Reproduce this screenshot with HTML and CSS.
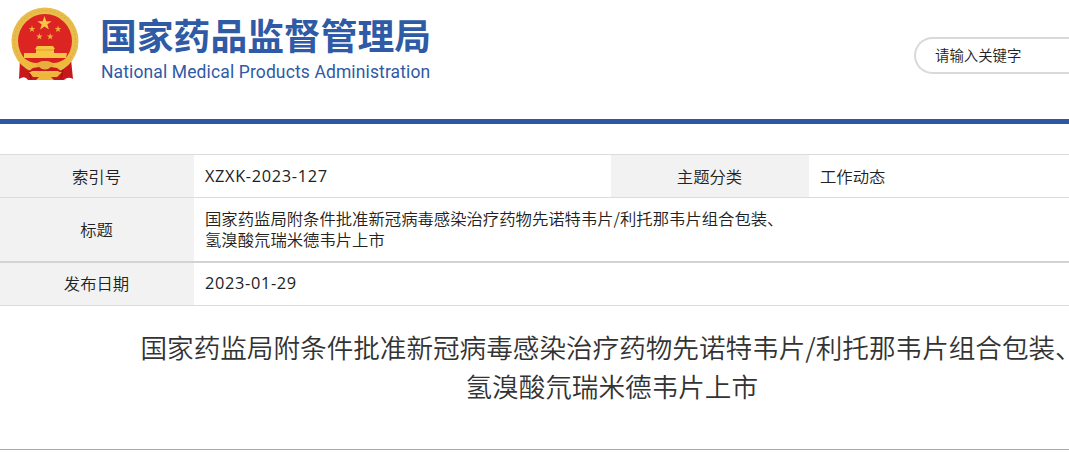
FILE: index.html
```html
<!DOCTYPE html>
<html lang="zh-CN">
<head>
	<title>国家药品监督管理局</title>
	<meta charset="utf-8">
	<meta name="viewport" content="width=device-width, initial-scale=1">

	<link rel="stylesheet" href="styles.css">
</head>
<body>

	<div class="header">
		<div class="logo">
			<svg class="emblem" viewBox="0 0 70 76" width="70" height="76">
				<!-- ribbon -->
				<path d="M9 52 L8 72 Q14 68 17 73 H53 Q57 69 62 72 L60 52 Z" fill="#c9181c"/>
				<path d="M17 57 L20 72 M53 57 L50 72" stroke="#a80f16" stroke-width="1.5"/>
				<!-- wheat ring -->
				<circle cx="34" cy="34" r="33.5" fill="#e8bd4c"/>
				<circle cx="34" cy="34" r="30.5" fill="none" stroke="#e0ae3e" stroke-width="1.2" stroke-dasharray="2 2"/>
				<circle cx="34" cy="34" r="27" fill="#dc2422"/>
				<!-- stars -->
				<path d="M33.5 9 L35.3 14.2 H40.6 L36.3 17.4 L37.9 22.6 L33.5 19.4 L29.1 22.6 L30.7 17.4 L26.4 14.2 H31.7 Z" fill="#f5c744"/>
				<g fill="#f0b040">
					<path d="M21 18.5 L21.8 21 H24.3 L22.3 22.5 L23.1 25 L21 23.5 L18.9 25 L19.7 22.5 L17.7 21 H20.2 Z"/>
					<path d="M47 18.5 L47.8 21 H50.3 L48.3 22.5 L49.1 25 L47 23.5 L44.9 25 L45.7 22.5 L43.7 21 H46.2 Z"/>
					<path d="M28.4 26 L29.2 28.5 H31.7 L29.7 30 L30.5 32.5 L28.4 31 L26.3 32.5 L27.1 30 L25.1 28.5 H27.6 Z"/>
					<path d="M39.2 26 L40 28.5 H42.5 L40.5 30 L41.3 32.5 L39.2 31 L37.1 32.5 L37.9 30 L35.9 28.5 H38.4 Z"/>
				</g>
				<!-- gate -->
				<path d="M26 39 H42 L44 42 H43 V46 H56 L55 51 H13 L13 46 H25 V42 H24 Z" fill="#f6c541"/>
				<path d="M25 43 H43" stroke="#dda02e" stroke-width="1"/>
				<!-- gear and knot -->
				<path d="M7 51 H61 Q54 61 46 61 L40 60 Q34 65 28 60 L22 61 Q13 60 7 51 Z" fill="#efb93c"/>
				<path d="M13 51 H55 Q49 56 42 56 Q34 52 26 56 Q19 56 13 51 Z" fill="#d3201f"/>
				<path d="M25 58 Q34 50 43 58 Q40 62 34 62 Q28 62 25 58 Z" fill="#e7ad3e"/>
				<path d="M22 61 L28 60 Q34 65 40 60 L46 61 L50 64 H18 Z" fill="#c9181c"/>
				<path d="M18 65 H28 L34 67 L40 65 H51 L46 70 L40 70 L43 73 H25 L28 70 L22 70 Z" fill="#f0b63b"/>
			</svg>
			<div class="logo_text">
				<div class="name">国家药品监督管理局</div>
				<div class="name_en">National Medical Products Administration</div>
			</div>
		</div>
		<div class="search">请输入关键字</div>
	</div>

	<table class="info">
		<tr class="row">
			<th>索引号</th>
			<td class="code">XZXK-2023-127</td>
			<th>主题分类</th>
			<td>工作动态</td>
		</tr>
		<tr class="row_title">
			<th>标题</th>
			<td colspan="3">国家药监局附条件批准新冠病毒感染治疗药物先诺特韦片/利托那韦片组合包装、<br>氢溴酸氘瑞米德韦片上市</td>
		</tr>
		<tr class="row">
			<th>发布日期</th>
			<td colspan="3" class="code">2023-01-29</td>
		</tr>
	</table>

	<h1 class="title">
		<div>国家药监局附条件批准新冠病毒感染治疗药物先诺特韦片/利托那韦片组合包装、</div>
		<div class="second">氢溴酸氘瑞米德韦片上市</div>
	</h1>

</body>
</html>
```
FILE: styles.css
```css
* {
	box-sizing: border-box;
}

body {
	margin: 0px;
	background: white;
	color: #222;
	font-family: "Noto Sans CJK SC", sans-serif;
	height: 454px;
	overflow: hidden;
}

.header {
	display: flex;
	justify-content: space-between;
	height: 124px;
	border-bottom: 5px solid #3058a2;
	overflow: hidden;
}

.logo {
	display: flex;
	padding: 7px 0px 0px 11px;
}

.logo_text {
	padding: 7px 0px 0px 19px;
	color: #2f5aa5;
	white-space: nowrap;
}

.name {
	font-size: 36.8px;
	line-height: 40px;
	font-weight: bold;
}

.name_en {
	font-family: Roboto, sans-serif;
	font-size: 17.5px;
	line-height: 20px;
	letter-spacing: 0.12px;
	margin: 8px 0px 0px 1px;
}

.search {
	width: 155px;
	height: 37px;
	margin-top: 37px;
	padding-left: 19px;
	border: 2px solid #d9d9d9;
	border-right: 0px;
	border-radius: 19px 0px 0px 19px;
	font-size: 14.4px;
	line-height: 31px;
	font-weight: 350;
}

.info {
	width: 1069px;
	margin-top: 30px;
	table-layout: fixed;
	border-collapse: collapse;
	font-size: 16.35px;
	line-height: 21px;
	font-weight: 350;
}

.info th {
	width: 194px;
	padding: 0px 1px 0px 0px;
	background: #f2f2f2;
	font-weight: 350;
	text-align: center;
}

.info td {
	padding: 0px 0px 0px 11px;
	white-space: nowrap;
}

.info th + td {
	width: 417px;
}

.info td + th {
	width: 198px;
}

.row {
	height: 43px;
	border-top: 1px solid #dcdcdc;
	border-bottom: 1px solid #dcdcdc;
}

.row_title {
	height: 64px;
	border-bottom: 2px solid #d3d3d3;
}

.row_title + .row {
	height: 44px;
}

.info .code {
	font-family: "Open Sans", sans-serif;
	font-weight: 400;
	letter-spacing: 0.65px;
}

.title {
	margin: 21px 0px 0px;
	padding-left: 140.5px;
	height: 123px;
	border-bottom: 1px solid #aaa;
	color: #333;
	font-size: 26.6px;
	line-height: 39px;
	font-weight: 350;
	white-space: nowrap;
	font-feature-settings: "halt";
	overflow: hidden;
}

.second {
	padding-left: 325px;
}
```
